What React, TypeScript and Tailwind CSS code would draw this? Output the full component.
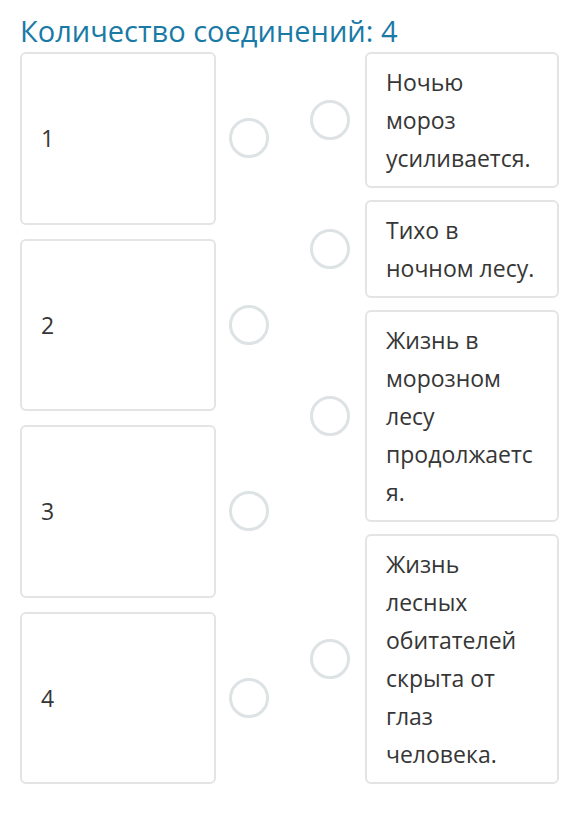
import React from 'react';

const leftItems = ['1', '2', '3', '4'];

const rightItems = [
  'Ночью мороз усиливается.',
  'Тихо в ночном лесу.',
  'Жизнь в морозном лесу продолжается.',
  'Жизнь лесных обитателей скрыта от глаз человека.',
];

const Dot = () => (
  <div className="w-[40px] h-[40px] rounded-full border-[3px] border-[#dde2e4] bg-white shrink-0" />
);

const App = () => {
  return (
    <div
      className="w-[576px] min-h-[837px] bg-white pt-[12px] pl-[20px] text-[#363636]"
      style={{ fontFamily: '"Open Sans", "Noto Sans", sans-serif' }}
    >
      {/* Header */}
      <h1 className="text-[29px] leading-[38px] text-[#1a7aa6] font-normal mb-[2px]">
        Количество соединений: 4
      </h1>

      <div className="flex">
        {/* Left column: numbers */}
        <div className="w-[196px] flex flex-col gap-[14px]">
          {leftItems.map((item) => (
            <div
              key={item}
              className="flex-1 flex items-center pl-[19px] border-2 border-[#e4e4e4] rounded-[6px] text-[23px]"
            >
              {item}
            </div>
          ))}
        </div>

        {/* Left dots */}
        <div className="ml-[13px] w-[40px] flex flex-col gap-[14px]">
          {leftItems.map((item) => (
            <div key={item} className="flex-1 flex items-center">
              <Dot />
            </div>
          ))}
        </div>

        {/* Right dots + sentences */}
        <div className="ml-[41px] flex flex-col gap-[12px]">
          {rightItems.map((text, index) => (
            <div key={index} className="flex items-center">
              <Dot />
              <div className="ml-[15px] w-[194px] border-2 border-[#e4e4e4] rounded-[6px] pl-[19px] pr-[20px] py-[9px] text-[23px] leading-[38px] [overflow-wrap:anywhere]">
                {text}
              </div>
            </div>
          ))}
        </div>
      </div>
    </div>
  );
};

export default App;
